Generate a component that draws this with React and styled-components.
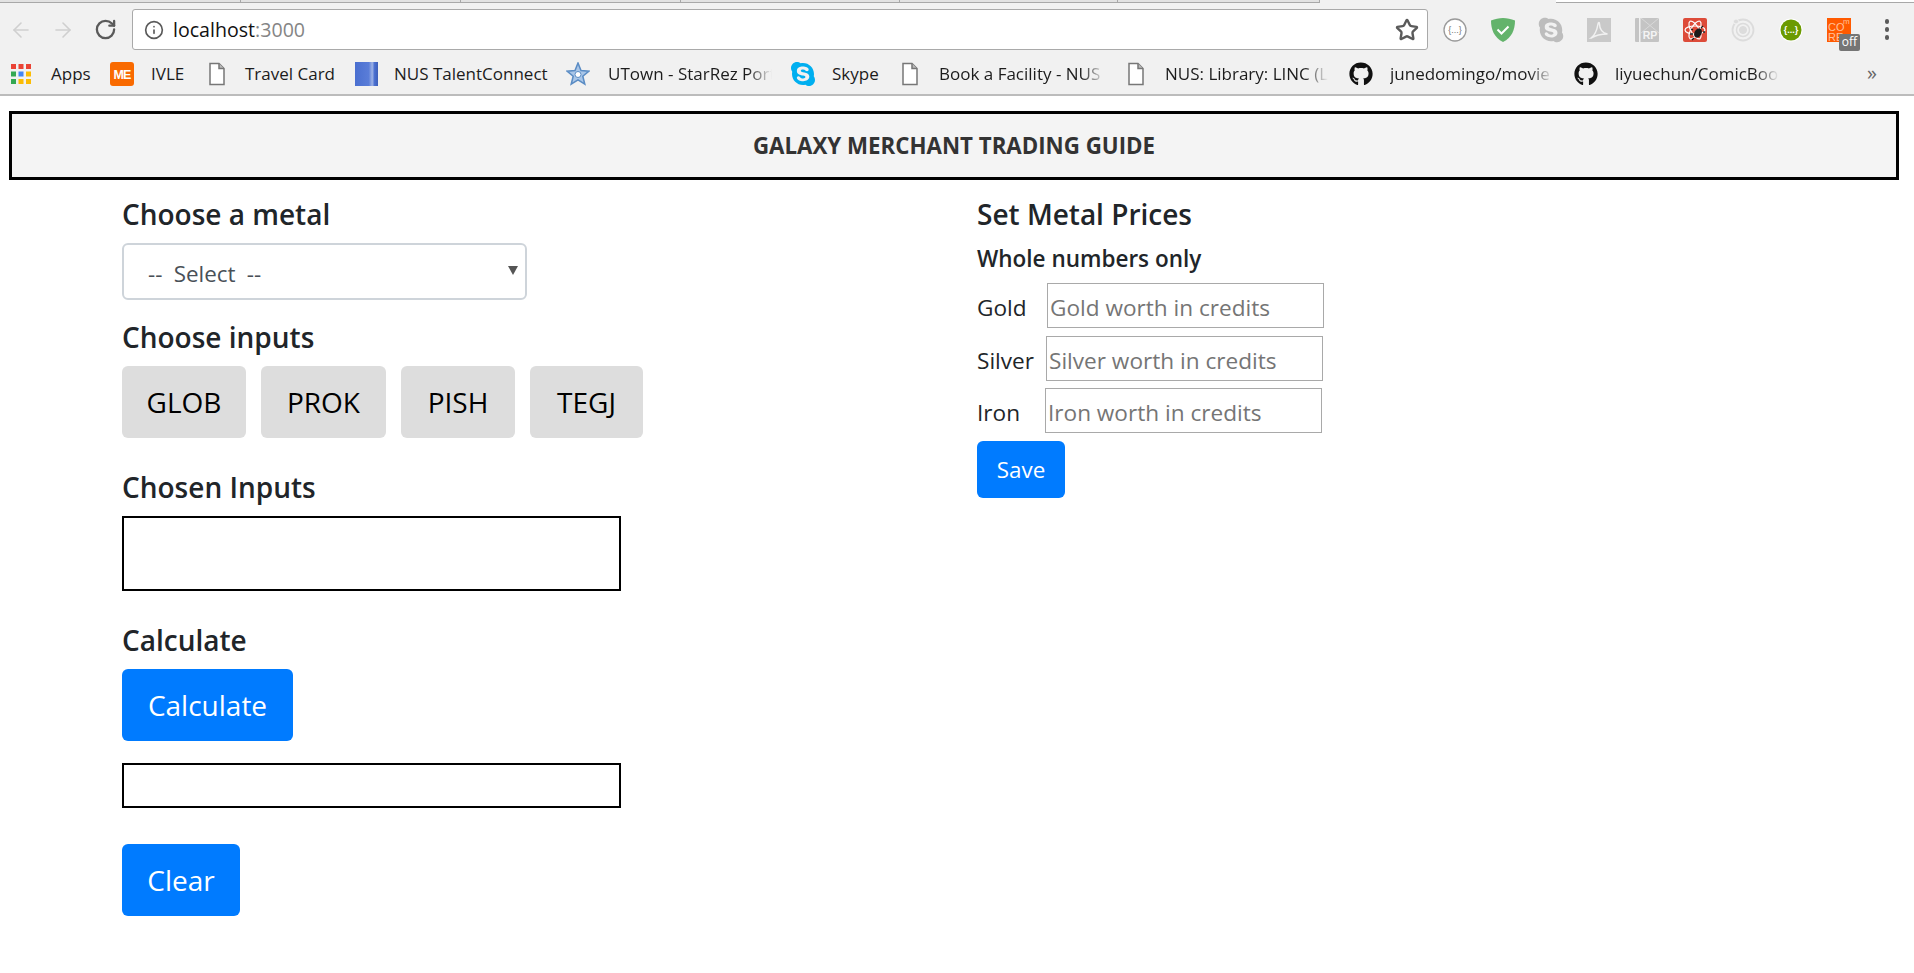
import React from "react";
import styled, { createGlobalStyle } from "styled-components";
import { ArrowLeft, ArrowRight, RotateCw, Info, Star } from "lucide-react";
import { FaGithub, FaSkype } from "react-icons/fa";

const FONT = `"Open Sans", "Noto Sans", sans-serif`;

const Global = createGlobalStyle`
  html, body { margin: 0; padding: 0; background: #fff; }
  body { font-family: ${FONT}; color: #212529; }
  * { box-sizing: border-box; }
`;

const Chrome = styled.div`
  height: 96px;
  background: #f1f1f1;
  border-bottom: 2px solid #bcbcbc;
  display: flex;
  flex-direction: column;
`;
const TabStrip = styled.div`
  height: 3px;
  display: flex;
  flex: none;
`;
const Tab = styled.div`
  width: ${(p) => p.$w}px;
  background: ${(p) => p.$bg || "#e2e2e2"};
  border-bottom: 1px solid #a8a8a8;
  border-right: ${(p) => (p.$end ? "0" : "1px solid #a8a8a8")};
  flex: ${(p) => (p.$grow ? 1 : "none")};
`;
const TabGap = styled.div`
  width: 236px;
`;
const Toolbar = styled.div`
  height: 47px;
  margin-top: 3px;
  display: flex;
  align-items: center;
  padding: 0 3px 0 0;
  flex: none;
`;
const NavSlot = styled.div`
  width: 42px;
  display: flex;
  justify-content: center;
  color: ${(p) => (p.$off ? "#cfcfcf" : "#5a5a5a")};
`;
const Omnibox = styled.div`
  flex: 1;
  height: 41px;
  margin: 0 3px 0 6px;
  background: #fff;
  border: 1px solid #a9a9a9;
  border-radius: 3px;
  display: flex;
  align-items: center;
  padding: 0 8px 0 11px;
  font-size: 20px;
  color: #111;
`;
const InfoSlot = styled.span`
  display: flex;
  color: #5a5a5a;
  margin-right: 9px;
`;
const Url = styled.span`
  flex: 1;
  font-size: 19.6px;
`;
const Port = styled.span`
  color: #858585;
`;
const ExtSlot = styled.div`
  position: relative;
  width: 48px;
  height: 30px;
  display: flex;
  align-items: center;
  justify-content: center;
`;
const OffBadge = styled.span`
  position: absolute;
  left: 24px;
  top: 19px;
  width: 21px;
  height: 17px;
  background: #757575;
  border-radius: 2px;
  color: #fff;
  font-size: 12px;
  line-height: 16px;
  text-align: center;
`;
const Dots = styled.div`
  display: flex;
  flex-direction: column;
  gap: 3.5px;
`;
const Dot = styled.span`
  width: 4.5px;
  height: 4.5px;
  border-radius: 50%;
  background: #5a5a5a;
`;
const BookmarkBar = styled.div`
  flex: 1;
  display: flex;
  align-items: center;
  padding-left: 11px;
  position: relative;
`;
const Bookmark = styled.div`
  display: flex;
  align-items: center;
  flex: none;
  width: ${(p) => p.$w}px;
`;
const BookIcon = styled.span`
  width: ${(p) => p.$iw || 24}px;
  flex: none;
  display: flex;
  justify-content: center;
  margin-right: ${(p) => p.$gap || 17}px;
`;
const BookLabel = styled.span`
  font-size: 17px;
  color: #1c1c1c;
  white-space: nowrap;
  width: ${(p) => p.$w}px;
  ${(p) =>
    p.$fade
      ? `-webkit-mask-image: linear-gradient(90deg, #000 ${p.$fade - 24}px, transparent ${p.$fade}px); mask-image: linear-gradient(90deg, #000 ${p.$fade - 24}px, transparent ${p.$fade}px);`
      : ""}
`;
const More = styled.span`
  position: absolute;
  left: 1867px;
  top: 6px;
  font-size: 20px;
  color: #666;
`;

const Page = styled.main`
  padding: 15px 15px 0 9px;
`;
const Banner = styled.header`
  height: 69px;
  width: 1890px;
  background: #f4f4f4;
  border: 3px solid #000;
  display: flex;
  align-items: center;
  justify-content: center;
  font-size: 22.3px;
  font-weight: 700;
  color: #333;
`;
const Columns = styled.div`
  display: grid;
  grid-template-columns: 855px 1fr;
  padding: 17px 0 0 113px;
`;
const Column = styled.section`
  display: flex;
  flex-direction: column;
  align-items: flex-start;
`;
const Title = styled.h5`
  margin: ${(p) => p.$top || 0}px 0 ${(p) => p.$bottom ?? 10}px;
  padding-bottom: 2px;
  font-size: 28px;
  line-height: 34px;
  font-weight: 600;
  color: #212529;
`;
const SubTitle = styled.h6`
  margin: 12px 0 10px;
  font-size: 22.5px;
  line-height: 28px;
  font-weight: 600;
  color: #212529;
`;
const SelectWrap = styled.div`
  position: relative;
  width: 405px;
  height: 57px;
  &::after {
    content: "";
    position: absolute;
    left: 386px;
    top: 23px;
    border-left: 5px solid transparent;
    border-right: 5px solid transparent;
    border-top: 9px solid #555;
  }
`;
const MetalSelect = styled.select`
  appearance: none;
  width: 100%;
  height: 100%;
  padding: 3px 24px 0 24px;
  background: #fff;
  border: 2px solid #ced4da;
  border-radius: 6px;
  color: #495057;
  font: 22.4px ${FONT};
  word-spacing: 5.5px;
`;
const ChipRow = styled.div`
  display: flex;
  gap: 15px;
`;
const Chip = styled.button`
  width: ${(p) => p.$w}px;
  height: 72px;
  padding: 0;
  border: 0;
  border-radius: 6px;
  background: #ddd;
  color: #000;
  font: 28px ${FONT};
`;
const OutputBox = styled.div`
  width: 499px;
  height: ${(p) => p.$h}px;
  border: 2px solid #000;
  margin-bottom: ${(p) => p.$bottom}px;
`;
const PrimaryButton = styled.button`
  width: ${(p) => p.$w}px;
  height: ${(p) => p.$h || 72}px;
  margin: ${(p) => p.$top || 0}px 0 ${(p) => p.$bottom || 0}px;
  padding: 0;
  border: 0;
  border-radius: 6px;
  background: #007bff;
  color: #fff;
  font: ${(p) => p.$size || 28}px ${FONT};
`;
const PriceRow = styled.label`
  display: flex;
  align-items: center;
  height: 45px;
  margin-bottom: ${(p) => p.$bottom}px;
  font-size: 22.6px;
  color: #212529;
`;
const PriceName = styled.span`
  width: ${(p) => p.$w}px;
  padding-top: 3px;
`;
const PriceInput = styled.input`
  width: 277px;
  height: 45px;
  padding: 3px 2px 0;
  border: 1px solid #a9a9a9;
  background: #fff;
  font: 22.6px ${FONT};
  &::placeholder {
    color: #757575;
    opacity: 1;
  }
`;

const AppsIcon = () => (
  <svg width="20" height="20" viewBox="0 0 20 20">
    {[
      ["#ea4335", "#ea4335", "#ea4335"],
      ["#34a853", "#4285f4", "#fbbc05"],
      ["#34a853", "#fbbc05", "#fbbc05"],
    ].map((row, r) =>
      row.map((c, i) => <rect key={`${r}-${i}`} x={i * 7.5} y={r * 7.5} width="5" height="5" fill={c} />)
    )}
  </svg>
);
const MeIcon = () => (
  <svg width="24" height="24" viewBox="0 0 24 24">
    <rect width="24" height="24" rx="3" fill="#f96a00" />
    <text x="12" y="16.500" textAnchor="middle" fontSize="12.500" fontWeight="700" fill="#fff" fontFamily="Liberation Sans" letterSpacing="-0.8">
      ME
    </text>
  </svg>
);
const FileIcon = () => (
  <svg width="18" height="24" viewBox="0 0 18 24" fill="none" stroke="#777" strokeWidth="1.5">
    <path d="M2 1.5h9l5 5v16H2z" fill="#fff" />
    <path d="M11 1.5v5h5" fill="#bbb" />
  </svg>
);
const BookBlue = () => (
  <svg width="23" height="24" viewBox="0 0 23 24">
    <defs>
      <linearGradient id="bookShade" x1="0" x2="1" y1="0" y2="0">
        <stop offset="0" stopColor="#4a6fd0" />
        <stop offset="0.6" stopColor="#5a7dd8" />
        <stop offset="0.75" stopColor="#9db2e6" />
        <stop offset="0.85" stopColor="#4a6fd0" />
        <stop offset="1" stopColor="#3e5fb8" />
      </linearGradient>
    </defs>
    <rect width="23" height="24" fill="url(#bookShade)" />
  </svg>
);
const StarBlue = () => (
  <svg width="24" height="24" viewBox="0 0 24 24">
    <path
      d="M12 1l3 7.6 8 .6-6.200 5 2 8L12 17.800 5.200 22.200l2-8L1 9.200l8-.6z"
      fill="#a9c6e8"
      stroke="#5a8cc4"
      strokeWidth="1.500"
    />
    <circle cx="12" cy="12.500" r="3" fill="#fff" stroke="#5a8cc4" />
  </svg>
);
const BracesRing = () => (
  <svg width="24" height="24" viewBox="0 0 24 24">
    <circle cx="12" cy="12" r="11" fill="#fff" stroke="#9a9a9a" strokeWidth="1.300" />
    <text x="12" y="15" textAnchor="middle" fontSize="9" fill="#777" fontFamily="Liberation Sans">
      {"{...}"}
    </text>
  </svg>
);
const Shield = () => (
  <svg width="24" height="24" viewBox="0 0 24 24">
    <path d="M12 0C8 0 4 1 0 2.500c0 9 3 17 12 21.500 9-4.500 12-12.500 12-21.500C20 1 16 0 12 0z" fill="#63b36b" />
    <path d="M6.500 11.500l4 4 7-7" fill="none" stroke="#fff" strokeWidth="2" />
  </svg>
);
const PdfIcon = () => (
  <svg width="24" height="24" viewBox="0 0 24 24">
    <rect width="24" height="24" fill="#c9c9c9" />
    <path
      d="M4 20c3-2 6-8 7-14 .3-2 1.500-2 1.500 0 0 5 3 9 8 10-5 0-10 0-16 4z"
      fill="none"
      stroke="#f1f1f1"
      strokeWidth="1.500"
    />
  </svg>
);
const RpIcon = () => (
  <svg width="24" height="24" viewBox="0 0 24 24">
    <rect width="24" height="24" rx="1" fill="#c4c4c4" />
    <rect x="4" width="1.500" height="24" fill="#f1f1f1" />
    <path d="M6 0l18 15M24 0L6 15" stroke="#d9d9d9" strokeWidth="1" />
    <text x="15" y="21" textAnchor="middle" fontSize="10.500" fontWeight="700" fill="#f4f4f4" fontFamily="Liberation Sans">
      RP
    </text>
  </svg>
);
const ReactBug = () => (
  <svg width="24" height="24" viewBox="0 0 24 24">
    <rect width="24" height="24" rx="2" fill="#dd4b39" />
    <g fill="none" stroke="#fff" strokeWidth="1.200">
      <ellipse cx="12" cy="12" rx="10" ry="4" />
      <ellipse cx="12" cy="12" rx="10" ry="4" transform="rotate(60 12 12)" />
      <ellipse cx="12" cy="12" rx="10" ry="4" transform="rotate(120 12 12)" />
    </g>
    <ellipse cx="15" cy="15" rx="3.500" ry="5" fill="#1b1b1b" transform="rotate(30 15 15)" />
    <path d="M10 12l-2-1M10 16l-3 0M11 20l-2 2M18 10l2-2M20 14l2 0" stroke="#1b1b1b" strokeWidth="1.300" />
  </svg>
);
const IonIcon = () => (
  <svg width="24" height="24" viewBox="0 0 24 24" fill="none" stroke="#dcdcdc">
    <circle cx="12" cy="12" r="10.500" strokeWidth="1.800" />
    <circle cx="12" cy="12" r="6.500" strokeWidth="1.500" />
    <circle cx="12" cy="12" r="3.500" fill="#dcdcdc" />
    <circle cx="5" cy="3.500" r="2.500" fill="#dcdcdc" stroke="#f1f1f1" />
  </svg>
);
const GreenBraces = () => (
  <svg width="24" height="24" viewBox="0 0 24 24">
    <circle cx="12" cy="12" r="11.500" fill="#fff" />
    <circle cx="12" cy="12" r="10.500" fill="#6b9a00" />
    <text x="12" y="15" textAnchor="middle" fontSize="9" fontWeight="700" fill="#fff" fontFamily="Liberation Sans">
      {"{...}"}
    </text>
  </svg>
);
const CoreIcon = () => (
  <svg width="24" height="24" viewBox="0 0 24 24">
    <rect width="24" height="24" fill="#ff5a00" />
    <g fill="#ffc09a" fontFamily="Liberation Sans" fontSize="11">
      <text x="1" y="13">
        CO
      </text>
      <text x="1" y="23">
        RE
      </text>
      <text x="16" y="6" fontSize="8">
        m
      </text>
    </g>
  </svg>
);

const bookmarks = [
  { icon: <AppsIcon />, iw: 20, gap: 20, label: "Apps", w: 99, lw: 52 },
  { icon: <MeIcon />, label: "IVLE", w: 98, lw: 50 },
  { icon: <FileIcon />, iw: 18, gap: 19, label: "Travel Card", w: 147, lw: 100 },
  { icon: <BookBlue />, iw: 23, gap: 16, label: "NUS TalentConnect", w: 211, lw: 165 },
  { icon: <StarBlue />, gap: 18, label: "UTown - StarRez Port", w: 225, lw: 172, fade: 164 },
  { icon: <FaSkype size={28} color="#00aff0" />, gap: 17, label: "Skype", w: 110, lw: 60 },
  { icon: <FileIcon />, iw: 18, gap: 20, label: "Book a Facility - NUS", w: 226, lw: 172, fade: 166 },
  { icon: <FileIcon />, iw: 18, gap: 20, label: "NUS: Library: LINC (L", w: 222, lw: 165, fade: 163 },
  { icon: <FaGithub size={24} color="#111" />, label: "junedomingo/movie", w: 225, lw: 172, fade: 163 },
  { icon: <FaGithub size={24} color="#111" />, label: "liyuechun/ComicBoo", w: 210, lw: 170, fade: 164 },
];

const extensions = [
  <BracesRing />,
  <Shield />,
  <FaSkype size={28} color="#bdbdbd" />,
  <PdfIcon />,
  <RpIcon />,
  <ReactBug />,
  <IonIcon />,
  <GreenBraces />,
];

const prices = [
  { name: "Gold", w: 70, bottom: 8 },
  { name: "Silver", w: 69, bottom: 7 },
  { name: "Iron", w: 68, bottom: 8 },
];

export default function App() {
  return (
    <>
      <Global />
      <Chrome>
        <TabStrip>
          <Tab $w={241} />
          <Tab $w={220} />
          <Tab $w={220} />
          <Tab $w={219} />
          <Tab $w={218} />
          <Tab $w={202} />
          <TabGap />
          <Tab $grow $end $bg="#fff" />
        </TabStrip>
        <Toolbar>
          <NavSlot $off>
            <ArrowLeft size={24} strokeWidth={1.6} />
          </NavSlot>
          <NavSlot $off>
            <ArrowRight size={24} strokeWidth={1.6} />
          </NavSlot>
          <NavSlot>
            <RotateCw size={23} strokeWidth={2.4} />
          </NavSlot>
          <Omnibox>
            <InfoSlot>
              <Info size={20} strokeWidth={2} />
            </InfoSlot>
            <Url>
              localhost<Port>:3000</Port>
            </Url>
            <Star size={24} strokeWidth={2.4} color="#5a5a5a" />
          </Omnibox>
          {extensions.map((icon, i) => (
            <ExtSlot key={i}>{icon}</ExtSlot>
          ))}
          <ExtSlot>
            <CoreIcon />
            <OffBadge>off</OffBadge>
          </ExtSlot>
          <ExtSlot>
            <Dots>
              <Dot />
              <Dot />
              <Dot />
            </Dots>
          </ExtSlot>
        </Toolbar>
        <BookmarkBar>
          {bookmarks.map((b) => (
            <Bookmark key={b.label} $w={b.w}>
              <BookIcon $iw={b.iw} $gap={b.gap}>
                {b.icon}
              </BookIcon>
              <BookLabel $w={b.lw} $fade={b.fade}>
                {b.label}
              </BookLabel>
            </Bookmark>
          ))}
          <More>»</More>
        </BookmarkBar>
      </Chrome>
      <Page>
        <Banner>GALAXY MERCHANT TRADING GUIDE</Banner>
        <Columns>
          <Column>
            <Title>Choose a metal</Title>
            <SelectWrap>
              <MetalSelect defaultValue="">
                <option value="">-- Select --</option>
                <option>Gold</option>
                <option>Silver</option>
                <option>Iron</option>
              </MetalSelect>
            </SelectWrap>
            <Title $top={20}>Choose inputs</Title>
            <ChipRow>
              <Chip $w={124}>GLOB</Chip>
              <Chip $w={125}>PROK</Chip>
              <Chip $w={114}>PISH</Chip>
              <Chip $w={113}>TEGJ</Chip>
            </ChipRow>
            <Title $top={32} $bottom={10}>
              Chosen Inputs
            </Title>
            <OutputBox $h={75} $bottom={32} />
            <Title>Calculate</Title>
            <PrimaryButton $w={171} $bottom={22}>
              Calculate
            </PrimaryButton>
            <OutputBox $h={45} $bottom={36} />
            <PrimaryButton $w={118}>Clear</PrimaryButton>
          </Column>
          <Column>
            <Title $bottom={0}>Set Metal Prices</Title>
            <SubTitle>Whole numbers only</SubTitle>
            {prices.map((p) => (
              <PriceRow key={p.name} $bottom={p.bottom}>
                <PriceName $w={p.w}>{p.name}</PriceName>
                <PriceInput placeholder={`${p.name} worth in credits`} />
              </PriceRow>
            ))}
            <PrimaryButton $w={88} $h={57} $size={22.4}>
              Save
            </PrimaryButton>
          </Column>
        </Columns>
      </Page>
    </>
  );
}
